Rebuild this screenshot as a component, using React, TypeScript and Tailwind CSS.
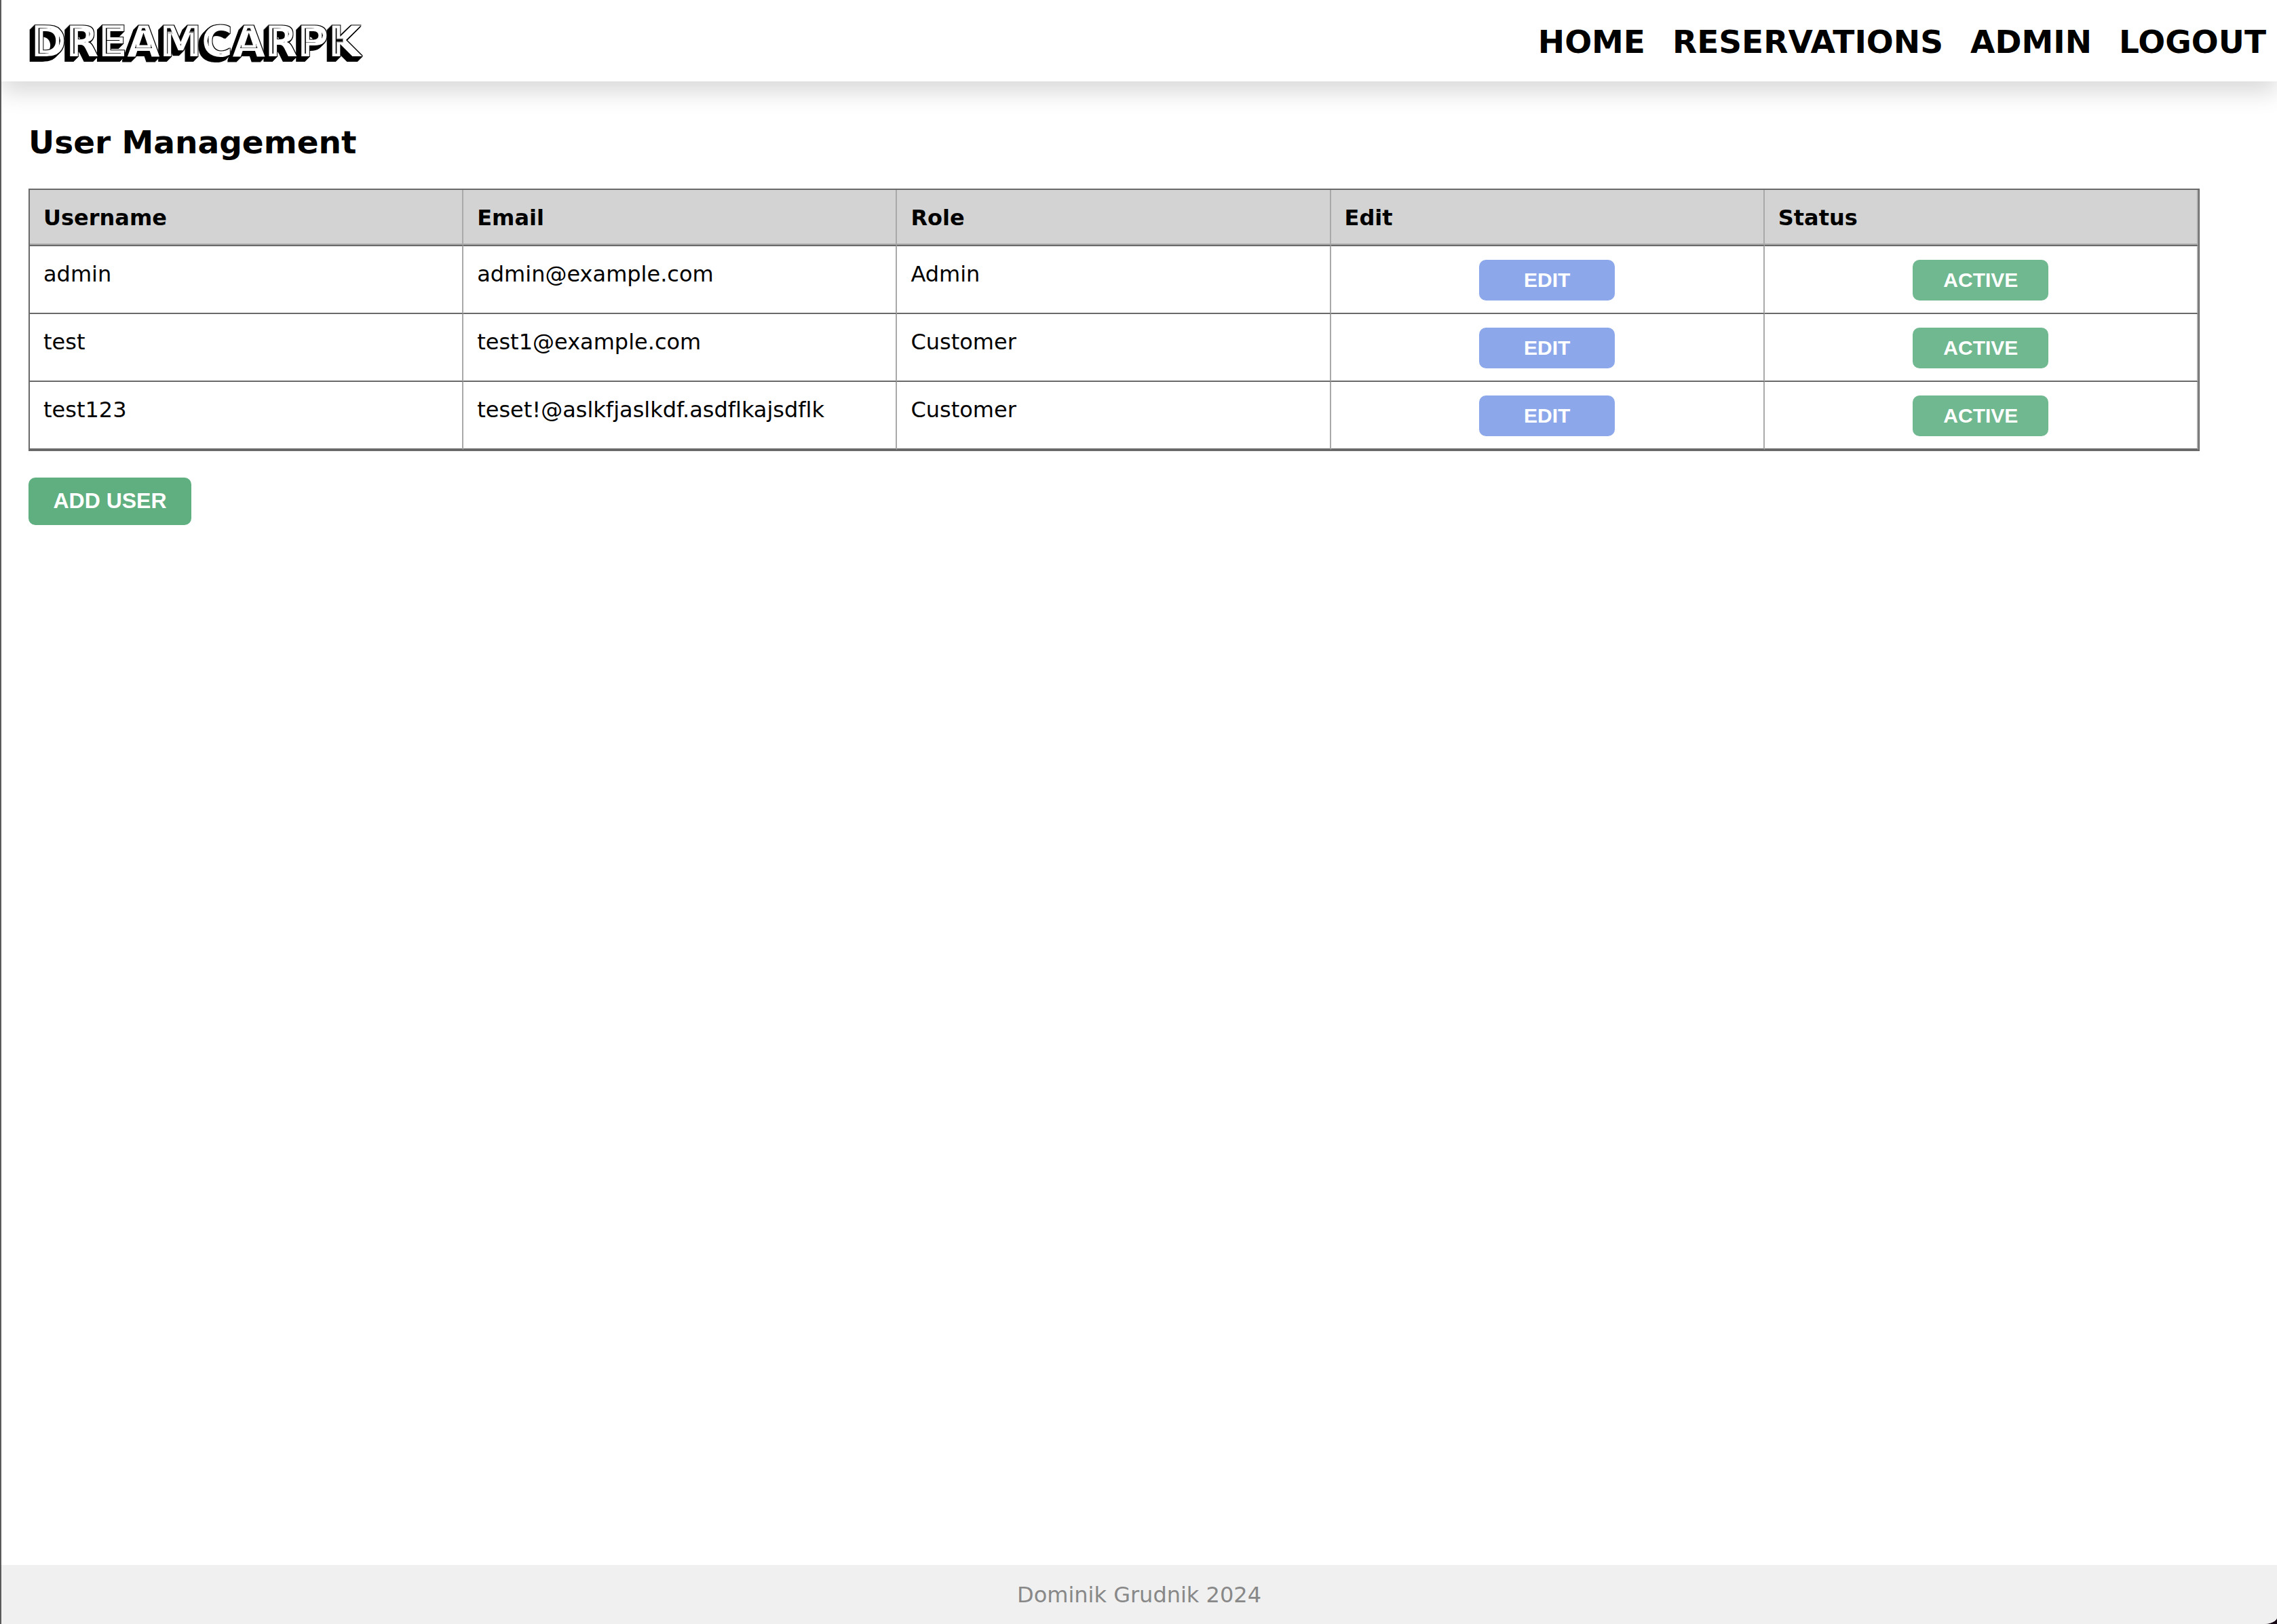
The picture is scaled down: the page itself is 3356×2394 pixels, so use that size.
const NAV_LINKS = ["HOME", "RESERVATIONS", "ADMIN", "LOGOUT"];

const COLUMNS = ["Username", "Email", "Role", "Edit", "Status"];

const USERS = [
  { username: "admin", email: "admin@example.com", role: "Admin" },
  { username: "test", email: "test1@example.com", role: "Customer" },
  { username: "test123", email: "teset!@aslkfjaslkdf.asdflkajsdflk", role: "Customer" },
];

const EXTRUSION = [1, 2, 3, 4, 5, 6, 7];

/* White inline lettering with a black outline and a block shade to the lower left. */
function LogoShade() {
  return (
    <svg aria-hidden="true" className="absolute h-0 w-0">
      <filter
        id="logo-shade"
        x="-5%"
        y="-10%"
        width="110%"
        height="130%"
        colorInterpolationFilters="sRGB"
      >
        <feMorphology in="SourceAlpha" operator="dilate" radius="1" result="outline" />
        {EXTRUSION.map((d) => (
          <feOffset key={d} in="outline" dx={-d} dy={d} result={`shade${d}`} />
        ))}
        <feFlood floodColor="#fff" result="white" />
        <feComposite in="white" in2="SourceAlpha" operator="in" result="face" />
        <feMorphology in="SourceAlpha" operator="erode" radius="5 4" result="core" />
        <feMerge>
          {EXTRUSION.map((d) => (
            <feMergeNode key={d} in={`shade${d}`} />
          ))}
          <feMergeNode in="outline" />
          <feMergeNode in="face" />
          <feMergeNode in="core" />
        </feMerge>
      </filter>
    </svg>
  );
}

function Header() {
  return (
    <header className="relative flex h-[120px] items-center justify-between bg-white pt-1 pr-4 pl-11 shadow-[0_16px_32px_rgba(0,0,0,0.15)]">
      <LogoShade />
      <a
        href="#"
        className="text-[62px] leading-[60px] font-bold [font-kerning:none] [filter:url(#logo-shade)]"
      >
        DREAMCARPK
      </a>
      <nav className="flex gap-10 text-[47px] leading-[60px] font-bold">
        {NAV_LINKS.map((label) => (
          <a key={label} href="#">
            {label}
          </a>
        ))}
      </nav>
    </header>
  );
}

function UserTable() {
  return (
    <table className="w-full table-fixed border-separate border-spacing-0 border-2 border-[#696969] text-[32px] leading-[39px] [font-variant-ligatures:none]">
      <thead>
        <tr>
          {COLUMNS.map((name) => (
            <th
              key={name}
              scope="col"
              className="border-r-2 border-b-2 border-[#a9a9a9] bg-[#d3d3d3] px-5 pt-[22px] pb-[18px] text-left font-bold"
            >
              {name}
            </th>
          ))}
        </tr>
      </thead>
      <tbody className="[&>tr:first-child>td]:border-t-2 [&>tr:first-child>td]:border-t-[#696969]">
        {USERS.map((user) => (
          <tr key={user.username}>
            {[user.username, user.email, user.role].map((value, i) => (
              <td
                key={i}
                className="border-r-2 border-b-2 border-r-[#a9a9a9] border-b-[#696969] px-5 pt-[22px] align-top"
              >
                {value}
              </td>
            ))}
            <td className="border-r-2 border-b-2 border-r-[#a9a9a9] border-b-[#696969] px-5 pt-5 pb-[18px]">
              <button
                type="button"
                className="mx-auto block h-[60px] w-[200px] rounded-[10px] bg-[#8ca8eb] font-['Liberation_Sans',Arial,sans-serif] text-[30px] leading-[60px] font-bold text-white"
              >
                EDIT
              </button>
            </td>
            <td className="border-r-2 border-b-2 border-r-[#a9a9a9] border-b-[#696969] px-5 pt-5 pb-[18px]">
              <button
                type="button"
                className="mx-auto block h-[60px] w-[200px] rounded-[10px] bg-[#70b88f] font-['Liberation_Sans',Arial,sans-serif] text-[30px] leading-[60px] font-bold text-white"
              >
                ACTIVE
              </button>
            </td>
          </tr>
        ))}
      </tbody>
    </table>
  );
}

export default function App() {
  return (
    <div className="bg-[#170a16] font-['DejaVu_Sans',Verdana,sans-serif] text-black">
      <div className="flex min-h-screen flex-col overflow-hidden rounded-br-[20px_10px] border-l-2 border-[#5a5a5a] bg-white">
        <Header />
        <main className="flex-1 pt-[60px] pr-[114px] pl-10">
          <h1 className="mb-[38px] text-[47px] leading-[60px] font-bold">User Management</h1>
          <UserTable />
          <button
            type="button"
            className="mt-[39px] h-[70px] w-60 rounded-[10px] bg-[#5faf80] pb-0.5 font-['Liberation_Sans',Arial,sans-serif] text-[32px] leading-[60px] font-bold text-white"
          >
            ADD USER
          </button>
        </main>
        <footer className="bg-[#f0f0f0] pt-[25px] pb-[23px] text-center text-[32px] leading-[39px] text-[#888888]">
          Dominik Grudnik 2024
        </footer>
      </div>
    </div>
  );
}
